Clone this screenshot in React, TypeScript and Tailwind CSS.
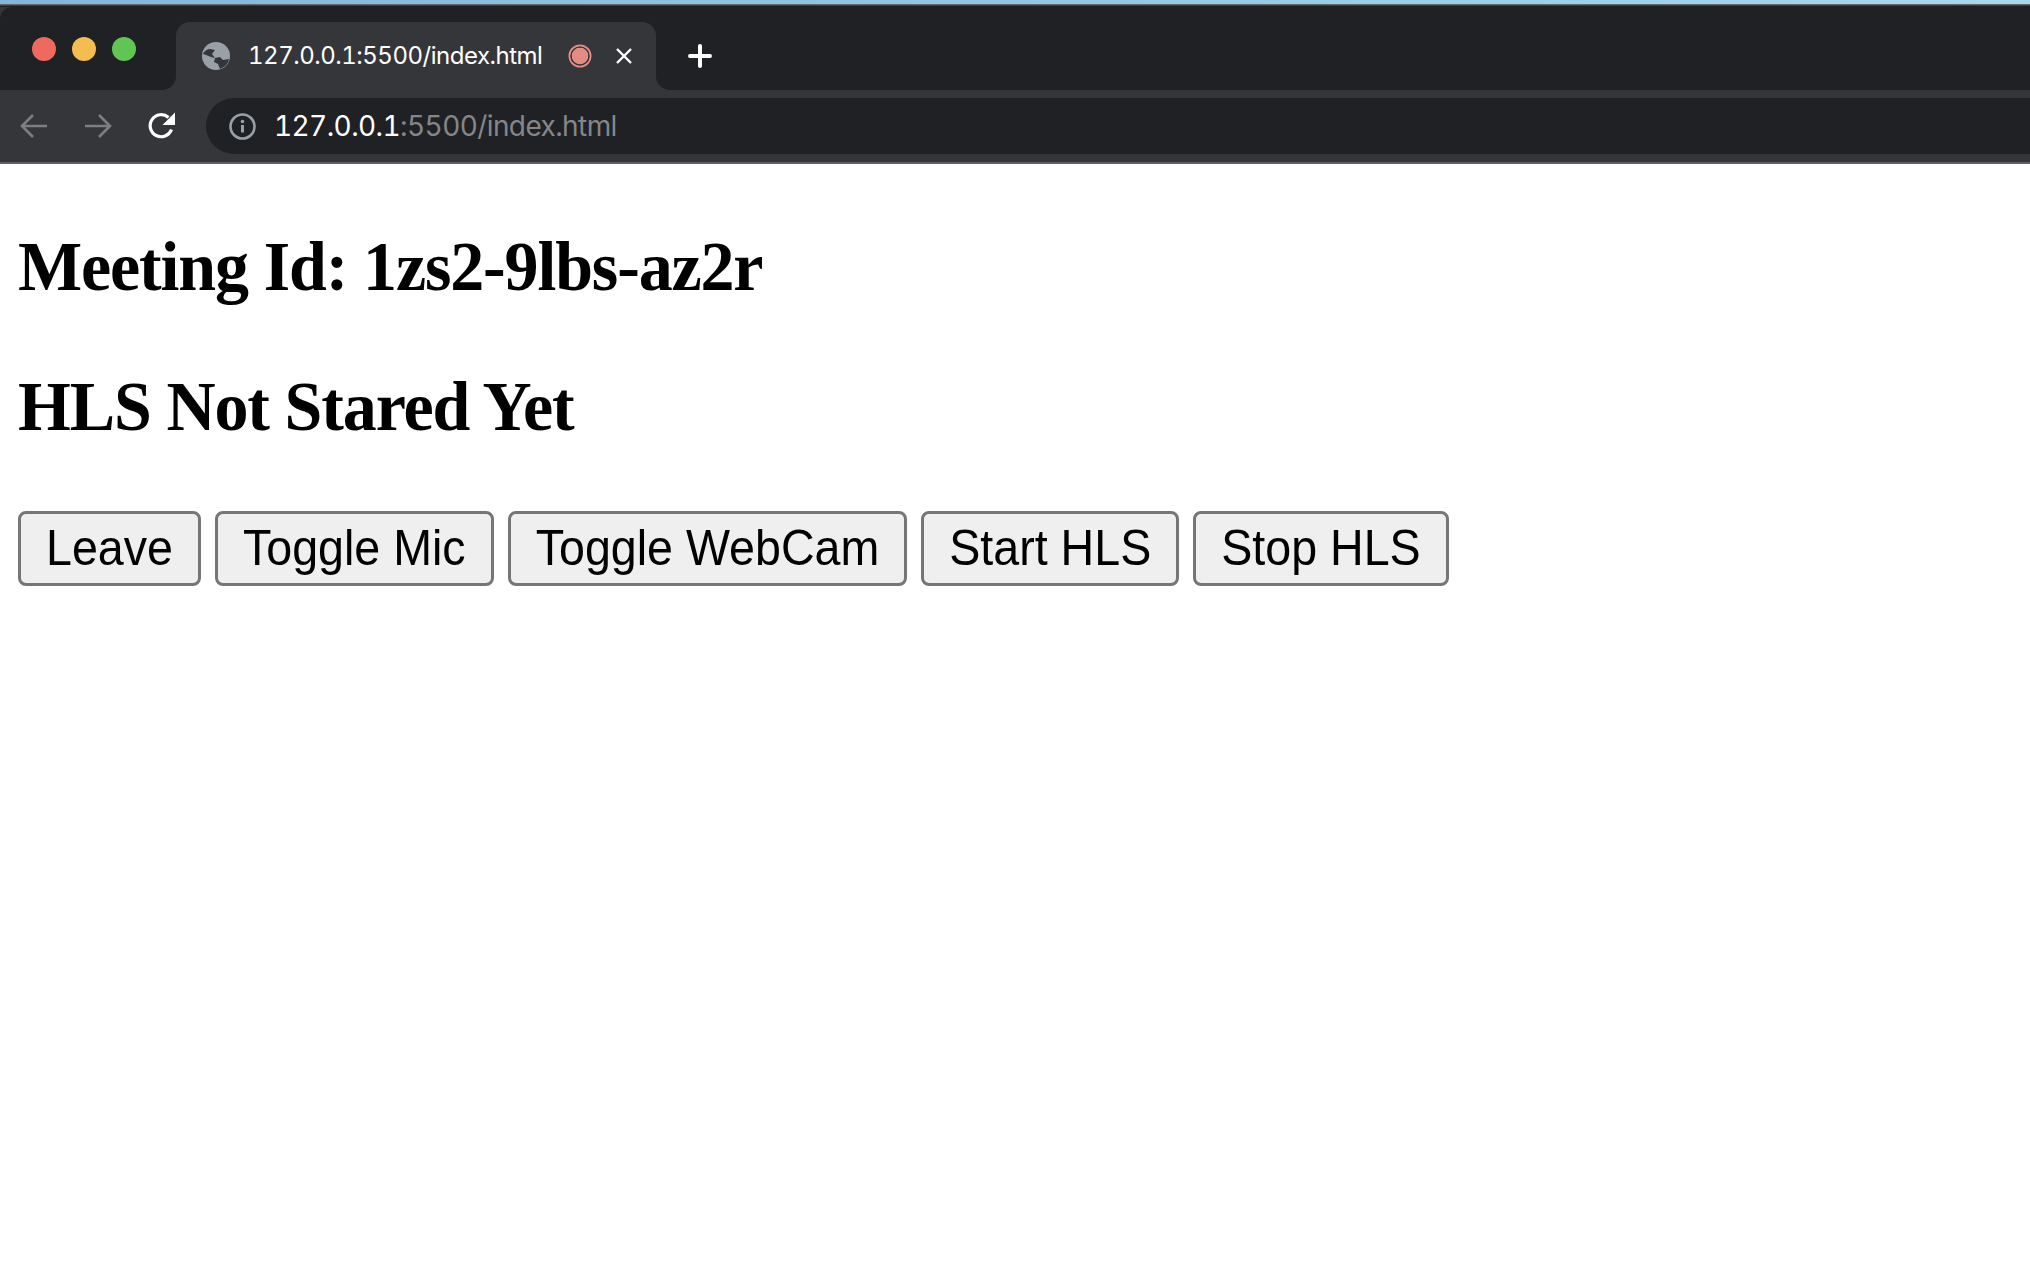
const GlobeIcon = () => (
  <svg width="28" height="28" viewBox="0 0 28 28" className="shrink-0">
    <circle cx="14" cy="14" r="14" fill="#9aa0a6" />
    <path d="M2 10c2-2 4-3 6-3l5 1-3 4 3 4-4-1-5-2-3-1z" fill="#35363a" />
    <path d="M13 16l5-1 3 3 6-1c-1 5-4 8-9 10l-2-5-4-2z" fill="#35363a" />
  </svg>
);

const NavArrow = ({ flip }: { flip?: boolean }) => (
  <svg width="28" height="26" viewBox="0 0 28 26" fill="none" stroke="#7d7e81" strokeWidth="2.6" className={flip ? "-scale-x-100" : ""}>
    <path d="M27 13H2M13 2L2 13l11 11" />
  </svg>
);

const ReloadIcon = () => (
  <svg width="28" height="28" viewBox="0 0 28 28" fill="none">
    <path d="M23.5 17.5A11 11 0 1 1 20.5 5.5" stroke="#fff" strokeWidth="3.2" />
    <path d="M27 0.5v12.5H14.5z" fill="#fff" />
  </svg>
);

const InfoIcon = () => (
  <svg width="27" height="27" viewBox="0 0 27 27" fill="none" className="shrink-0">
    <circle cx="13.5" cy="13.5" r="12" stroke="#9aa0a6" strokeWidth="2.6" />
    <path d="M13.5 12v7.5" stroke="#9aa0a6" strokeWidth="3" />
    <circle cx="13.5" cy="8.5" r="1.8" fill="#9aa0a6" />
  </svg>
);

const TabBar = () => (
  <div className="flex h-[83px] bg-[#35363a]">
    <div className="flex w-[176px] items-start gap-4 rounded-br-[14px] rounded-tl-[12px] bg-[#202124] pl-8 pt-[30px]">
      <span className="h-6 w-6 rounded-full bg-[#ee6a5f]" />
      <span className="h-6 w-6 rounded-full bg-[#f5bd4f]" />
      <span className="h-6 w-6 rounded-full bg-[#61c554]" />
    </div>
    <div className="bg-[#202124]">
      <div className="mt-[15px] flex h-[68px] w-[480px] items-center rounded-t-[14px] bg-[#35363a] pl-[26px]">
        <GlobeIcon />
        <span className="ml-[18px] w-[320px] font-['Inter',sans-serif] text-[24px] tracking-[-0.49px] text-white tabular-nums">127.0.0.1:5500/index.html</span>
        <svg width="24" height="24" viewBox="0 0 24 24" className="shrink-0">
          <circle cx="12" cy="12" r="8.5" fill="#e48b84" />
          <circle cx="12" cy="12" r="10.5" fill="none" stroke="#e48b84" strokeWidth="2" />
          <circle cx="12" cy="12" r="9" fill="none" stroke="#35363a" strokeWidth="1.2" />
        </svg>
        <svg width="16" height="16" viewBox="0 0 16 16" stroke="#fff" strokeWidth="2.4" className="ml-[24px] shrink-0">
          <path d="M1 1l14 14M15 1L1 15" />
        </svg>
      </div>
    </div>
    <div className="flex flex-1 items-start rounded-bl-[14px] bg-[#202124] pl-[32px] pt-[37px]">
      <svg width="24" height="24" viewBox="0 0 24 24" stroke="#fff" strokeWidth="4" strokeLinecap="round">
        <path d="M12 2v20M2 12h20" />
      </svg>
    </div>
  </div>
);

const AddressBar = () => (
  <div className="flex h-[72px] items-start bg-[#35363a] pt-2">
    <div className="flex h-14 w-[206px] items-center pl-[20px]">
      <NavArrow />
      <span className="ml-[36px]"><NavArrow flip /></span>
      <span className="ml-[36px]"><ReloadIcon /></span>
    </div>
    <div className="flex h-14 flex-1 items-center rounded-l-full bg-[#202124] pl-[23px]">
      <InfoIcon />
      <span className="ml-[18px] font-['Inter',sans-serif] text-[28px] tracking-[-0.6px] text-white tabular-nums">
        127.0.0.1<span className="text-[#84868a]">:5500/index.html</span>
      </span>
    </div>
  </div>
);

const actions = ["Leave", "Toggle Mic", "Toggle WebCam", "Start HLS", "Stop HLS"];

export default function App() {
  return (
    <div className="min-h-[1274px] bg-white">
      <div className="h-1 bg-gradient-to-r from-[#7fb8dc] to-[#a6d8ee]" />
      <div className="h-[3px] bg-gradient-to-b from-[#777] to-[#111]" />
      <TabBar />
      <AddressBar />
      <div className="h-0.5 bg-[#5f6063]" />
      <main className="px-[18px] pt-[66px]">
        <h1 className="origin-center scale-y-[1.04] font-['Liberation_Serif',serif] text-[68px] font-bold leading-[72px] tracking-[-1.15px]">Meeting Id: 1zs2-9lbs-az2r</h1>
        <h1 className="mt-[68px] origin-center scale-y-[1.04] font-['Liberation_Serif',serif] text-[68px] font-bold leading-[72px] tracking-[-1.15px]">HLS Not Stared Yet</h1>
        <div className="mt-[69px] flex gap-3.5">
          {actions.map((label) => (
            <button key={label} className="h-[75px] rounded-[8px] border-[3px] border-[#767676] bg-[#efefef] px-[25px] font-['Liberation_Sans',sans-serif] text-[46.6px] text-black">
              <span className="inline-block scale-y-[1.08]">{label}</span>
            </button>
          ))}
        </div>
      </main>
    </div>
  );
}
